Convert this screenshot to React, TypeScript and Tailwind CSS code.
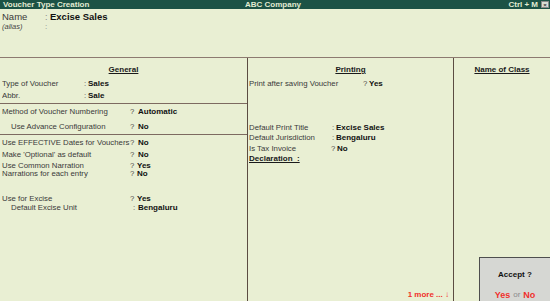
import React from "react";

const font = { fontFamily: '"Liberation Sans", Arial, sans-serif' };

type RowProps = {
  label: string;
  value: string;
  mark?: string;
  labelW: string;
  markW?: string;
  className?: string;
};

const Row: React.FC<RowProps> = ({ label, value, mark = "?", labelW, markW = "w-[8px]", className = "" }) => (
  <div className={`flex items-center h-[10px] leading-none text-[7.8px] ${className}`}>
    <span className={`${labelW} shrink-0 text-[#3a3a3a] whitespace-nowrap overflow-hidden`}>{label}</span>
    <span className={`text-[#4a4a4a] ${markW} shrink-0`}>{mark}</span>
    <span className="font-bold text-[#111] text-[8px]">{value}</span>
  </div>
);

const Heading: React.FC<{ children: React.ReactNode; className?: string }> = ({ children, className = "" }) => (
  <div className={`h-[10px] flex items-center justify-center leading-none ${className}`}>
    <span className="text-[8px] font-bold text-[#1a1a1a] underline underline-offset-[1px]">{children}</span>
  </div>
);

export default function App() {
  return (
    <div style={font} className="w-[550px] h-[301px] flex flex-col overflow-hidden bg-[#e9efd3] select-none">
      {/* title bar */}
      <div className="h-[9px] shrink-0 flex items-center bg-[#1c5245] text-[#e2ebd2] text-[8px] font-bold leading-none pl-[3px] pr-[1px]">
        <div className="flex-1">Voucher Type Creation</div>
        <div className="flex-1 text-center pr-[6px]">ABC Company</div>
        <div className="flex-1 flex justify-end items-center gap-[3px]">
          <span>Ctrl + M</span>
          <span className="w-[8px] h-[7px] bg-[#d8dcd4] border border-[#888] flex items-center justify-center text-[#333] text-[6px] leading-none">×</span>
        </div>
      </div>

      {/* name block */}
      <div className="h-[49px] shrink-0 border-b border-[#8d7a70] pl-[2px]">
        <div className="mt-[3px] h-[10px] flex items-center leading-none">
          <span className="w-[43px] text-[9.5px] text-[#3a3a3a]">Name</span>
          <span className="w-[5px] text-[9px] text-[#888]">:</span>
          <span className="text-[9.5px] font-bold text-[#111]">Excise Sales</span>
        </div>
        <div className="h-[9px] flex items-center leading-none">
          <span className="w-[43px] text-[7.5px] italic text-[#444]">(alias)</span>
          <span className="text-[8px] text-[#888]">:</span>
        </div>
      </div>

      {/* columns */}
      <div className="flex-1 flex min-h-0">
        {/* General */}
        <div className="w-[248px] shrink-0 border-r border-[#5c4c42] flex flex-col">
          <Heading className="mt-[7px]">General</Heading>
          <div className="pl-[2px] mt-[4px]">
            <Row label="Type of Voucher" value="Sales" mark=":" markW="w-[4px]" labelW="w-[82px]" />
            <Row label="Abbr." value="Sale" mark=":" markW="w-[4px]" labelW="w-[82px]" className="mt-[2px]" />
          </div>
          <div className="mt-[2px] h-px bg-[#7d6a60]" />
          <div className="pl-[2px]">
            <Row label="Method of Voucher Numbering" value="Automatic" labelW="w-[128px]" className="mt-[3px]" />
            <div className="pl-[9px]">
              <Row label="Use Advance Configuration" value="No" labelW="w-[119px]" className="mt-[5px]" />
            </div>
          </div>
          <div className="mt-[2px] h-px bg-[#7d6a60]" />
          <div className="pl-[2px]">
            <Row label="Use EFFECTIVE Dates for Vouchers" value="No" labelW="w-[128px]" className="mt-[3px]" />
            <Row label="Make 'Optional' as default" value="No" labelW="w-[128px]" className="mt-[2px]" />
            <Row label="Use Common Narration" value="Yes" markW="w-[7px]" labelW="w-[128px]" className="mt-[2px] !h-[8px]" />
            <Row label="Narrations for each entry" value="No" markW="w-[7px]" labelW="w-[128px]" className="!h-[8px]" />
            <Row label="Use for Excise" value="Yes" markW="w-[7px]" labelW="w-[128px]" className="mt-[16px] !h-[9px]" />
            <div className="pl-[9px]">
              <Row label="Default Excise Unit" value="Bengaluru" mark=":" markW="w-[5px]" labelW="w-[122px]" className="!h-[9px]" />
            </div>
          </div>
        </div>

        {/* Printing */}
        <div className="w-[206px] shrink-0 border-r border-[#5c4c42] flex flex-col">
          <Heading className="mt-[7px]">Printing</Heading>
          <div className="pl-[1px]">
            <Row label="Print after saving Voucher" value="Yes" markW="w-[6px]" labelW="w-[114px]" className="mt-[4px]" />
            <Row label="Default Print Title" value="Excise Sales" mark=":" markW="w-[4px]" labelW="w-[83px]" className="mt-[34px]" />
            <Row label="Default Jurisdiction" value="Bengaluru" mark=":" markW="w-[4px]" labelW="w-[83px]" />
            <Row label="Is Tax Invoice" value="No" markW="w-[6px]" labelW="w-[82px]" className="mt-[1px]" />
            <div className="h-[10px] flex items-center leading-none">
              <span className="text-[8px] font-bold text-[#1a1a1a] underline underline-offset-[1px] whitespace-pre">Declaration  :</span>
            </div>
          </div>
          <div className="mt-auto h-[10px] mb-[1px] pr-[4px] flex items-center justify-end leading-none text-[8px] font-bold text-[#f0302c]">
            1 more ... ↓
          </div>
        </div>

        {/* Name of Class */}
        <div className="flex-1 flex flex-col">
          <Heading className="mt-[7px]">Name of Class</Heading>
          <div className="mt-auto self-end w-[71px] h-[44px] bg-[#d6d7d3] border border-[#4e4e4e] border-r-0 border-b-0 flex flex-col items-center">
            <div className="mt-[12px] h-[10px] flex items-center text-[8px] font-bold text-[#111] leading-none">Accept ?</div>
            <div className="mt-[10px] h-[10px] flex items-center gap-[3px] leading-none">
              <span className="text-[9px] font-bold text-[#f0302c]">Yes</span>
              <span className="text-[8px] text-[#8a8a8a]">or</span>
              <span className="text-[9px] font-bold text-[#f0302c]">No</span>
            </div>
          </div>
        </div>
      </div>
    </div>
  );
}
